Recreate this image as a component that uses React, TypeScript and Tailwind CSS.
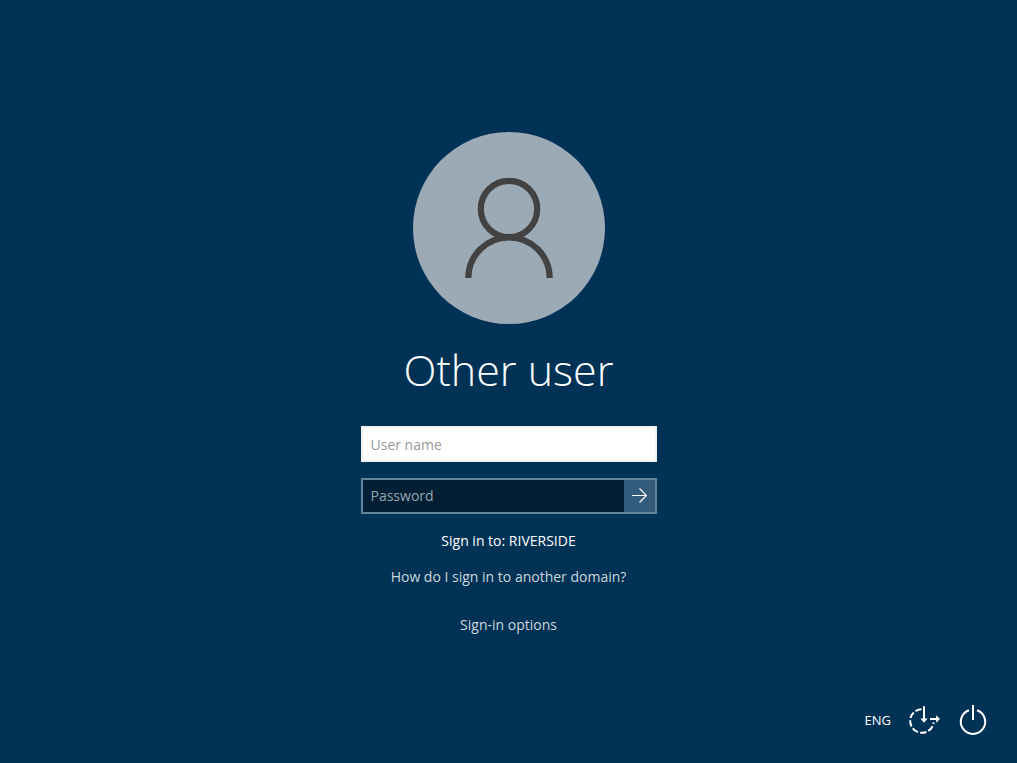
import React from "react";

function UserIcon() {
  return (
    <svg viewBox="0 0 192 192" className="size-full" fill="none" stroke="#424242" strokeWidth="6.2" aria-hidden="true">
      <circle cx="96" cy="77" r="28.2" />
      <path d="M55.3 146A40.7 40.7 0 0 1 136.7 146" />
    </svg>
  );
}

function ArrowIcon() {
  return (
    <svg viewBox="0 0 16 16" className="size-4" fill="none" stroke="#fff" strokeWidth="1.2" aria-hidden="true">
      <path d="M1 7.5H15.5M8.5 0.5L15.5 7.5L8.5 14.5" />
    </svg>
  );
}

function EaseOfAccessIcon() {
  return (
    <svg viewBox="0 0 32 32" className="size-8" fill="none" stroke="#fff" strokeWidth="2" aria-hidden="true">
      <path d="M12.5 5.2A11.8 11.8 0 1 0 24.7 18.5" strokeDasharray="6.4 2.2" />
      <path d="M15 2.3V16" />
      <path d="M11.4 14.6H18.6L15 18.8Z" fill="#fff" stroke="none" />
      <path d="M21 15H28" />
      <path d="M27 11.2L31 15L27 18.8Z" fill="#fff" stroke="none" />
    </svg>
  );
}

function PowerIcon() {
  return (
    <svg viewBox="0 0 32 32" className="size-8" fill="none" stroke="#fff" strokeWidth="2" aria-hidden="true">
      <path d="M12 6.2A12.2 12.2 0 1 0 20 6.2" />
      <path d="M16 1V16" />
    </svg>
  );
}

export default function App() {
  return (
    <div className="flex min-h-screen flex-col bg-[#003256] font-['Open_Sans','Noto_Sans',sans-serif] text-white">
      <main className="flex flex-1 flex-col items-center px-4 pt-[132px]">
        <div className="size-48 rounded-full bg-[#9caab5]">
          <UserIcon />
        </div>
        <h1 className="mt-4 text-[43px] leading-[60px] font-light">Other user</h1>
        <form className="mt-[26px] flex w-full max-w-[296px] flex-col gap-4" onSubmit={(e) => e.preventDefault()}>
          <input
            type="text"
            aria-label="User name"
            placeholder="User name"
            className="h-9 w-full border-2 border-[#f2f2f2] bg-white px-2 text-sm text-black outline-none placeholder:text-[#999999]"
          />
          <div className="flex h-9 border-2 border-[#668499]">
            <input
              type="password"
              aria-label="Password"
              placeholder="Password"
              className="min-w-0 flex-1 bg-[#001e34] px-2 text-sm text-white outline-none placeholder:text-[#99a5ae]"
            />
            <button type="submit" aria-label="Submit" className="flex w-[31px] items-center justify-center bg-[#335b7c]">
              <ArrowIcon />
            </button>
          </div>
        </form>
        <p className="mt-[17px] text-sm leading-5">Sign in to: RIVERSIDE</p>
        <a href="#domain" className="mt-4 text-sm leading-5 text-[#ccd6dd]">How do I sign in to another domain?</a>
        <a href="#options" className="mt-7 text-sm leading-5 text-[#ccd6dd]">Sign-in options</a>
      </main>
      <footer className="flex items-center justify-end gap-4 pr-7 pb-[27px]">
        <button type="button" className="pr-0.5 text-[13px] leading-5">ENG</button>
        <button type="button" aria-label="Ease of access"><EaseOfAccessIcon /></button>
        <button type="button" aria-label="Power"><PowerIcon /></button>
      </footer>
    </div>
  );
}
